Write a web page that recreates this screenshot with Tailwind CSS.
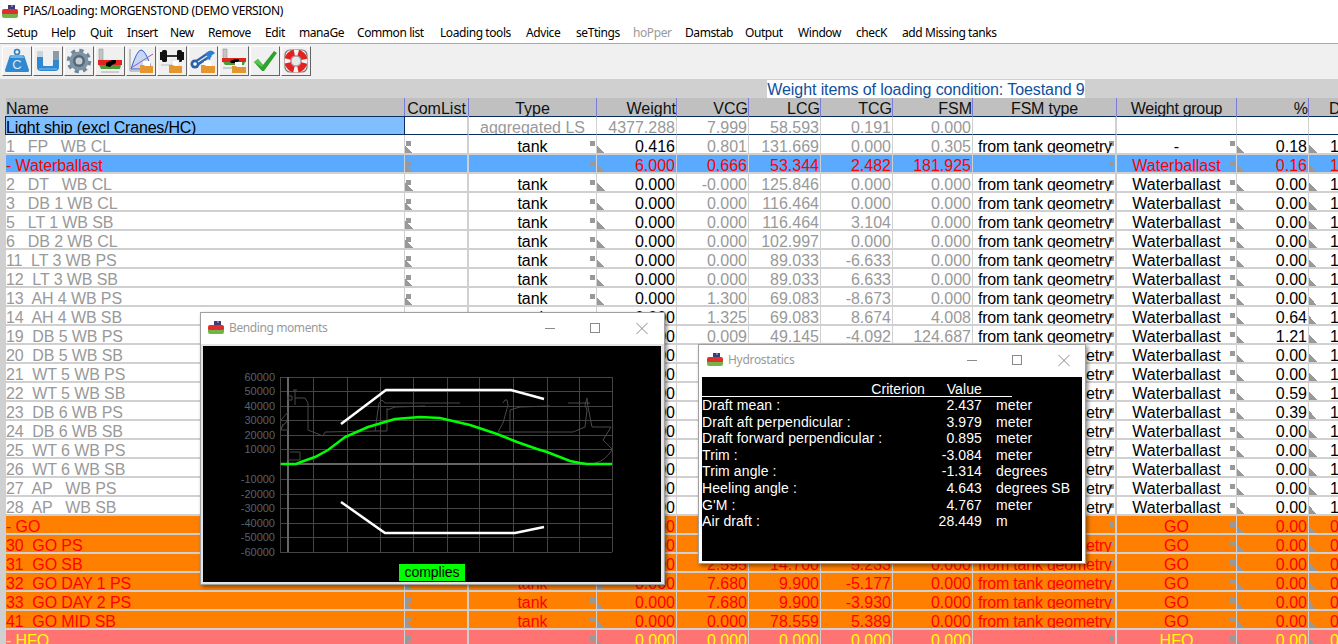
<!DOCTYPE html>
<html lang="en">
<head>
<meta charset="utf-8">
<title>PIAS/Loading</title>
<script src="https://cdn.jsdelivr.net/npm/@tailwindcss/browser@4"></script>
</head>
<body class="m-0 overflow-hidden">
<div class="relative w-[1338px] h-[644px] overflow-hidden bg-[#d0d0d0] flex flex-col font-['Liberation_Sans',sans-serif]">

  <!-- title bar -->
  <div class="h-[22px] bg-white flex items-center pl-[2px] gap-[5px] shrink-0">
    <svg width="16" height="14" viewBox="0 0 16 14" class="mt-[1px]"><path d="M6 0h7v5H6z" fill="#3c3c78"/><path d="M9 0h2v2H9z" fill="#7a7ab8"/><rect x="0" y="4" width="16" height="6" rx="2" fill="#e0302c"/><path d="M0 9h16v2q0 2-2 2H2q-2 0-2-2z" fill="#74b347"/></svg>
    <span class="font-['Noto_Sans',sans-serif] text-[12px] tracking-[-0.35px] text-black">PIAS/Loading: MORGENSTOND (DEMO VERSION)</span>
  </div>

  <!-- menu -->
  <div class="h-[21px] bg-white flex items-center pl-[7px] shrink-0 font-['Noto_Sans',sans-serif] text-[12px] tracking-[-0.42px] text-black whitespace-nowrap">
    <span class="w-[44px]">Setup</span><span class="w-[39px]">Help</span><span class="w-[37px]">Quit</span><span class="w-[43px]">Insert</span><span class="w-[38px]">New</span><span class="w-[57px]">Remove</span><span class="w-[34px]">Edit</span><span class="w-[58px]">manaGe</span><span class="w-[83px]">Common list</span><span class="w-[86px]">Loading tools</span><span class="w-[50px]">Advice</span><span class="w-[57px]">seTtings</span><span class="w-[52px] text-[#9a9a9a]">hoPper</span><span class="w-[60px]">Damstab</span><span class="w-[53px]">Output</span><span class="w-[58px]">Window</span><span class="w-[46px]">checK</span><span>add Missing tanks</span>
  </div>

  <!-- toolbar -->
  <div class="h-[36px] bg-[#f0f0f0] border-t border-[#a8a8a8] flex items-start gap-[1px] pl-[2px] pt-[2px] shrink-0">
    <div class="w-[30px] h-[30px] bg-[#f0f0f0] border border-t-white border-l-white border-r-[#666] border-b-[#666] flex items-center justify-center">
      <svg width="26" height="26" viewBox="0 0 26 26"><circle cx="13" cy="4" r="2.500" fill="none" stroke="#2f7fc4" stroke-width="1.600"/><path d="M7 7h12q1 0 1.500 1.500L25 22q.5 2-1.500 2h-21Q.5 24 1 22L5.500 8.500Q6 7 7 7z" fill="#2f88d0"/><path d="M7 7h12l1 3H6z" fill="#6db4e6"/><text x="13" y="21" text-anchor="middle" font-size="13" fill="#d8ecfa" font-family="Liberation Sans">C</text></svg>
    </div>
    <div class="w-[30px] h-[30px] bg-[#f0f0f0] border border-t-white border-l-white border-r-[#666] border-b-[#666] flex items-center justify-center">
      <svg width="26" height="26" viewBox="0 0 26 26"><path d="M2 3h6v14q0 1 1 1h8q1 0 1-1V3h6v16q0 4-4 4H6q-4 0-4-4z" fill="#2f88d0"/><path d="M2 3h6v6H2z" fill="#c9d4dc"/><path d="M18 3h6v9h-6z" fill="#8c9aa5"/><path d="M4 21h18" stroke="#7cc0ef" stroke-width="1"/></svg>
    </div>
    <div class="w-[30px] h-[30px] bg-[#f0f0f0] border border-t-white border-l-white border-r-[#666] border-b-[#666] flex items-center justify-center">
      <svg width="26" height="26" viewBox="0 0 26 26"><circle cx="13" cy="13" r="10.500" fill="none" stroke="#6f8799" stroke-width="3.500" stroke-dasharray="4.200 4.050"/><circle cx="13" cy="13" r="9.500" fill="#7d94a6"/><circle cx="13" cy="13" r="6" fill="#54697a"/><circle cx="13" cy="13" r="3.500" fill="#c8ced3"/></svg>
    </div>
    <div class="w-[30px] h-[30px] bg-[#f0f0f0] border border-t-white border-l-white border-r-[#666] border-b-[#666] flex items-center justify-center">
      <svg width="26" height="26" viewBox="0 0 26 26"><path d="M2 1h4v11H2z" fill="#c4c4c4" stroke="#888" stroke-width=".5"/><path d="M1 12h24v5H1z" fill="#e0241f"/><path d="M2 17h22l-1 4H4z" fill="#4c9a3a"/><path d="M9 15l6-3 4 0v3l-4 2-2 2-4-1z" fill="#000"/><path d="M4 24h18" stroke="#c0c0c0" stroke-width="1.500"/></svg>
    </div>
    <div class="w-[30px] h-[30px] bg-[#f0f0f0] border border-t-white border-l-white border-r-[#666] border-b-[#666] flex items-center justify-center">
      <svg width="26" height="26" viewBox="0 0 26 26"><path d="M2 1v22h12" fill="none" stroke="#999" stroke-width="1"/><path d="M3 21Q9 2 13 2q4 0 9 14v5H3z" fill="#c7d8f2" stroke="#3a5ccc" stroke-width="1"/><path d="M3 20L25 6" stroke="#9a5ab8" stroke-width="1"/><rect x="15" y="13" width="7" height="5" fill="#fff"/><path d="M12 17h4l1 1h8v7H12z" fill="#e5962e"/></svg>
    </div>
    <div class="w-[30px] h-[30px] bg-[#f0f0f0] border border-t-white border-l-white border-r-[#666] border-b-[#666] flex items-center justify-center">
      <svg width="26" height="26" viewBox="0 0 26 26"><path d="M1 8h24" stroke="#333" stroke-width="2"/><rect x="1" y="4" width="2" height="8" fill="#111"/><rect x="3" y="2" width="5" height="12" rx="1.500" fill="#111"/><rect x="18" y="2" width="5" height="12" rx="1.500" fill="#111"/><rect x="23" y="4" width="2" height="8" fill="#111"/><path d="M2 17h14" stroke="#ccc" stroke-width="1.500"/><rect x="13" y="12" width="7" height="6" fill="#fff" stroke="#ccc" stroke-width=".5"/><path d="M10 17h4l1 1h8v7H10z" fill="#e5962e"/></svg>
    </div>
    <div class="w-[30px] h-[30px] bg-[#f0f0f0] border border-t-white border-l-white border-r-[#666] border-b-[#666] flex items-center justify-center">
      <svg width="26" height="26" viewBox="0 0 26 26"><path d="M4 17L20 6" stroke="#2d62a8" stroke-width="6"/><circle cx="5" cy="16" r="4.500" fill="#2d62a8"/><circle cx="5" cy="16" r="1.800" fill="#fff"/><path d="M16 5q5-5 9 0l-4 3-1 4q-4-1-4-7z" fill="#2d7fd0"/><path d="M8 14l9-6" stroke="#dfe8f2" stroke-width="1.500"/><rect x="14" y="13" width="7" height="5" fill="#fff"/><path d="M11 17h4l1 1h9v7H11z" fill="#e5962e"/></svg>
    </div>
    <div class="w-[30px] h-[30px] bg-[#f0f0f0] border border-t-white border-l-white border-r-[#666] border-b-[#666] flex items-center justify-center">
      <svg width="26" height="26" viewBox="0 0 26 26"><path d="M2 1h4v10H2z" fill="#c4c4c4" stroke="#888" stroke-width=".5"/><path d="M1 10h24v4H1z" fill="#e0241f"/><path d="M2 14h22l-1 3H4z" fill="#4c9a3a"/><path d="M9 13l5-2h4v2l-4 2-4 0z" fill="#000"/><path d="M2 20h10" stroke="#c0c0c0" stroke-width="1.500"/><rect x="14" y="14" width="7" height="5" fill="#fff"/><path d="M11 18h4l1 1h9v6H11z" fill="#e5962e"/></svg>
    </div>
    <div class="w-[30px] h-[30px] bg-[#f0f0f0] border border-t-white border-l-white border-r-[#666] border-b-[#666] flex items-center justify-center">
      <svg width="26" height="26" viewBox="0 0 26 26"><path d="M2 14l4-3 5 6L22 3l3 2-13 18h-2z" fill="#2fa12f"/><path d="M2 14l4-3 5 6-1 2z" fill="#55c455"/></svg>
    </div>
    <div class="w-[30px] h-[30px] bg-[#f0f0f0] border border-t-white border-l-white border-r-[#666] border-b-[#666] flex items-center justify-center">
      <svg width="26" height="26" viewBox="0 0 26 26"><rect x="2" y="2" width="22" height="22" rx="5" fill="none" stroke="#777" stroke-width="1.200"/><circle cx="13" cy="13" r="8.500" fill="none" stroke="#e3221f" stroke-width="6"/><circle cx="13" cy="13" r="8.500" fill="none" stroke="#f4f4f4" stroke-width="6" stroke-dasharray="4 9.350" stroke-dashoffset="2"/><circle cx="13" cy="13" r="5" fill="#e8e8e8" stroke="#8a8a8a" stroke-width="1"/></svg>
    </div>
  </div>

  <!-- caption chip -->
  <div class="h-[19px] pl-[767px] pt-[1px] shrink-0">
    <div class="w-[318px] h-[18px] bg-white text-[16px] leading-[19px] tracking-[-0.09px] text-[#0f4fa0] text-center whitespace-nowrap overflow-hidden">Weight items of loading condition: Toestand 9</div>
  </div>

  <!-- table -->
  <div class="pl-[6px] overflow-hidden">
    <table class="table-fixed w-[1404px] border-separate border-spacing-0 text-[16px] leading-[13px] text-black
      [&_th]:p-0 [&_th]:pt-[3px] [&_th]:h-[18px] [&_th]:leading-[15px] [&_th]:font-normal [&_th]:bg-[#c0c0c0] [&_th]:text-[#111] [&_th]:border-r [&_th]:border-[#7b7bdc] [&_th]:overflow-hidden
      [&_td]:p-0 [&_td]:pt-[4px] [&_td]:h-[19px] [&_td]:align-top [&_td]:overflow-hidden [&_td]:whitespace-pre [&_td]:border-r [&_td]:border-b-2 [&_td]:border-[#d0d0d0]
      [&_td:nth-child(2)]:border-r-2 [&_td:nth-child(9)]:border-r-2
      [&_td:first-child]:text-[#999] [&_td:first-child]:tracking-[-0.1px]
      [&_td:nth-child(n+5):nth-child(-n+8)]:text-[#999]
      [&_td:nth-child(3)]:text-center
      [&_td:nth-child(n+4):nth-child(-n+8)]:text-right [&_td:nth-child(n+4):nth-child(-n+8)]:pr-[1px]
      [&_td:nth-child(9)]:pl-[5px] [&_td:nth-child(9)]:tracking-[-0.22px]
      [&_td:nth-child(10)]:text-center
      [&_td:nth-child(11)]:text-right [&_td:nth-child(11)]:pr-[1px]
      [&_td:nth-child(12)]:pl-[21px]
      [&>tbody+tbody>tr>td:nth-child(2)]:[background:linear-gradient(#999,#999)_1px_6px/5px_5px_no-repeat,linear-gradient(45deg,#999_50%,transparent_50%)_0_100%/8px_8px_no-repeat]
      [&>tbody+tbody>tr>td:nth-child(3)]:[background:linear-gradient(#999,#999)_right_1px_top_6px/5px_5px_no-repeat]
      [&>tbody+tbody>tr>td:nth-child(4)]:[background:linear-gradient(45deg,#999_50%,transparent_50%)_0_100%/8px_8px_no-repeat]
      [&>tbody+tbody>tr>td:nth-child(9)]:[background:linear-gradient(#999,#999)_right_1px_top_6px/5px_5px_no-repeat]
      [&>tbody+tbody>tr>td:nth-child(10)]:[background:linear-gradient(#999,#999)_right_1px_top_6px/5px_5px_no-repeat]
      [&>tbody+tbody>tr>td:nth-child(11)]:[background:linear-gradient(45deg,#999_50%,transparent_50%)_0_100%/8px_8px_no-repeat]
      [&>tbody+tbody>tr>td:nth-child(12)]:[background:linear-gradient(45deg,#999_50%,transparent_50%)_0_100%/8px_8px_no-repeat]">
      <colgroup>
        <col class="w-[399px]"><col class="w-[64px]"><col class="w-[128px]"><col class="w-[80px]"><col class="w-[72px]"><col class="w-[72px]"><col class="w-[72px]"><col class="w-[80px]"><col class="w-[144px]"><col class="w-[120px]"><col class="w-[72px]"><col class="w-[101px]">
      </colgroup>
      <thead>
        <tr><th class="text-left">Name</th><th>ComList</th><th>Type</th><th class="text-right">Weight</th><th class="text-right">VCG</th><th class="text-right">LCG</th><th class="text-right">TCG</th><th class="text-right">FSM</th><th class="tracking-[-0.2px]">FSM type</th><th class="tracking-[-0.3px]">Weight group</th><th class="text-right">%</th><th class="text-left !pl-[20px] !border-r-0 whitespace-nowrap">Density</th></tr>
      </thead>
      <tbody class="bg-white [&_td]:!pt-[4px] [&_td]:!border-b [&_td]:!border-b-[#0b2e5e] [&_td]:border-t [&_td]:border-t-[#0b2e5e] [&_td:nth-child(n+2)]:!text-[#999] [&_td]:h-[19px]">
        <tr><td class="!text-black !tracking-[-0.2px] bg-[#80bfff] shadow-[-1px_0_0_#0b2e5e] !border-r !border-r-[#0b2e5e]">Light ship (excl Cranes/HC)</td><td></td><td>aggregated LS</td><td>4377.288</td><td>7.999</td><td>58.593</td><td>0.191</td><td>0.000</td><td></td><td></td><td></td><td></td></tr>
      </tbody>
      <tbody class="bg-white [&_td]:h-[20px] [&_td]:!pt-[5px]">
        <tr><td>1   FP   WB CL</td><td></td><td>tank</td><td>0.416</td><td>0.801</td><td>131.669</td><td>0.000</td><td>0.305</td><td>from tank geometry</td><td>-</td><td>0.18</td><td>1</td></tr>
      </tbody>
      <tbody class="bg-[#5aaaff] [&_td]:!text-[#ff0000]">
        <tr><td>- Waterballast</td><td></td><td></td><td>6.000</td><td>0.666</td><td>53.344</td><td>2.482</td><td>181.925</td><td></td><td>Waterballast</td><td>0.16</td><td>1</td></tr>
      </tbody>
      <tbody class="bg-white">
        <tr><td>2   DT   WB CL</td><td></td><td>tank</td><td>0.000</td><td>-0.000</td><td>125.846</td><td>0.000</td><td>0.000</td><td>from tank geometry</td><td>Waterballast</td><td>0.00</td><td>1</td></tr>
        <tr><td>3   DB 1 WB CL</td><td></td><td>tank</td><td>0.000</td><td>0.000</td><td>116.464</td><td>0.000</td><td>0.000</td><td>from tank geometry</td><td>Waterballast</td><td>0.00</td><td>1</td></tr>
        <tr><td>5   LT 1 WB SB</td><td></td><td>tank</td><td>0.000</td><td>0.000</td><td>116.464</td><td>3.104</td><td>0.000</td><td>from tank geometry</td><td>Waterballast</td><td>0.00</td><td>1</td></tr>
        <tr><td>6   DB 2 WB CL</td><td></td><td>tank</td><td>0.000</td><td>0.000</td><td>102.997</td><td>0.000</td><td>0.000</td><td>from tank geometry</td><td>Waterballast</td><td>0.00</td><td>1</td></tr>
        <tr><td>11  LT 3 WB PS</td><td></td><td>tank</td><td>0.000</td><td>0.000</td><td>89.033</td><td>-6.633</td><td>0.000</td><td>from tank geometry</td><td>Waterballast</td><td>0.00</td><td>1</td></tr>
        <tr><td>12  LT 3 WB SB</td><td></td><td>tank</td><td>0.000</td><td>0.000</td><td>89.033</td><td>6.633</td><td>0.000</td><td>from tank geometry</td><td>Waterballast</td><td>0.00</td><td>1</td></tr>
        <tr><td>13  AH 4 WB PS</td><td></td><td>tank</td><td>0.000</td><td>1.300</td><td>69.083</td><td>-8.673</td><td>0.000</td><td>from tank geometry</td><td>Waterballast</td><td>0.00</td><td>1</td></tr>
        <tr><td>14  AH 4 WB SB</td><td></td><td>tank</td><td>0.000</td><td>1.325</td><td>69.083</td><td>8.674</td><td>4.008</td><td>from tank geometry</td><td>Waterballast</td><td>0.64</td><td>1</td></tr>
        <tr><td>19  DB 5 WB PS</td><td></td><td>tank</td><td>0.000</td><td>0.009</td><td>49.145</td><td>-4.092</td><td>124.687</td><td>from tank geometry</td><td>Waterballast</td><td>1.21</td><td>1</td></tr>
        <tr><td>20  DB 5 WB SB</td><td></td><td>tank</td><td>0.000</td><td>0.000</td><td>49.145</td><td>4.092</td><td>0.000</td><td>from tank geometry</td><td>Waterballast</td><td>0.00</td><td>1</td></tr>
        <tr><td>21  WT 5 WB PS</td><td></td><td>tank</td><td>0.000</td><td>0.000</td><td>49.145</td><td>-7.000</td><td>0.000</td><td>from tank geometry</td><td>Waterballast</td><td>0.00</td><td>1</td></tr>
        <tr><td>22  WT 5 WB SB</td><td></td><td>tank</td><td>0.000</td><td>0.000</td><td>49.145</td><td>7.000</td><td>0.000</td><td>from tank geometry</td><td>Waterballast</td><td>0.59</td><td>1</td></tr>
        <tr><td>23  DB 6 WB PS</td><td></td><td>tank</td><td>0.000</td><td>0.000</td><td>29.000</td><td>-4.000</td><td>0.000</td><td>from tank geometry</td><td>Waterballast</td><td>0.39</td><td>1</td></tr>
        <tr><td>24  DB 6 WB SB</td><td></td><td>tank</td><td>0.000</td><td>0.000</td><td>29.000</td><td>4.000</td><td>0.000</td><td>from tank geometry</td><td>Waterballast</td><td>0.00</td><td>1</td></tr>
        <tr><td>25  WT 6 WB PS</td><td></td><td>tank</td><td>0.000</td><td>0.000</td><td>29.000</td><td>-7.000</td><td>0.000</td><td>from tank geometry</td><td>Waterballast</td><td>0.00</td><td>1</td></tr>
        <tr><td>26  WT 6 WB SB</td><td></td><td>tank</td><td>0.000</td><td>0.000</td><td>29.000</td><td>7.000</td><td>0.000</td><td>from tank geometry</td><td>Waterballast</td><td>0.00</td><td>1</td></tr>
        <tr><td>27  AP   WB PS</td><td></td><td>tank</td><td>0.000</td><td>0.000</td><td>8.000</td><td>-3.000</td><td>0.000</td><td>from tank geometry</td><td>Waterballast</td><td>0.00</td><td>1</td></tr>
        <tr><td>28  AP   WB SB</td><td></td><td>tank</td><td>0.000</td><td>0.000</td><td>8.000</td><td>3.000</td><td>0.000</td><td>from tank geometry</td><td>Waterballast</td><td>0.00</td><td>1</td></tr>
      </tbody>
      <tbody class="bg-[#ff8000] [&_td]:!text-[#ff0000]">
        <tr><td>- GO</td><td></td><td></td><td>0.000</td><td>0.000</td><td>0.000</td><td>0.000</td><td>0.000</td><td></td><td>GO</td><td>0.00</td><td>0</td></tr>
        <tr><td>30  GO PS</td><td></td><td>tank</td><td>0.000</td><td>2.595</td><td>14.700</td><td>-5.233</td><td>0.000</td><td>from tank geometry</td><td>GO</td><td>0.00</td><td>0</td></tr>
        <tr><td>31  GO SB</td><td></td><td>tank</td><td>0.000</td><td>2.595</td><td>14.700</td><td>5.233</td><td>0.000</td><td>from tank geometry</td><td>GO</td><td>0.00</td><td>0</td></tr>
        <tr><td>32  GO DAY 1 PS</td><td></td><td>tank</td><td>0.000</td><td>7.680</td><td>9.900</td><td>-5.177</td><td>0.000</td><td>from tank geometry</td><td>GO</td><td>0.00</td><td>0</td></tr>
        <tr><td>33  GO DAY 2 PS</td><td></td><td>tank</td><td>0.000</td><td>7.680</td><td>9.900</td><td>-3.930</td><td>0.000</td><td>from tank geometry</td><td>GO</td><td>0.00</td><td>0</td></tr>
        <tr><td>41  GO MID SB</td><td></td><td>tank</td><td>0.000</td><td>0.000</td><td>78.559</td><td>5.389</td><td>0.000</td><td>from tank geometry</td><td>GO</td><td>0.00</td><td>0</td></tr>
      </tbody>
      <tbody class="bg-[#ff7373] [&_td]:!text-[#ffff00]">
        <tr><td>- HFO</td><td></td><td></td><td>0.000</td><td>0.000</td><td>0.000</td><td>0.000</td><td>0.000</td><td></td><td>HFO</td><td>0.00</td><td>0</td></tr>
      </tbody>
    </table>
  </div>

  <!-- Bending moments window -->
  <div class="absolute left-[200px] top-[312px] w-[465px] h-[273px] bg-white border border-[#a0a0a0] shadow-[2px_2px_4px_rgba(0,0,0,0.45)] flex flex-col">
    <div class="h-[31px] flex items-center pl-[7px] pb-[2px] shrink-0">
      <svg width="16" height="14" viewBox="0 0 16 14"><path d="M6 0h7v5H6z" fill="#3c3c78"/><path d="M9 0h2v2H9z" fill="#7a7ab8"/><rect x="0" y="4" width="16" height="6" rx="2" fill="#e0302c"/><path d="M0 9h16v2q0 2-2 2H2q-2 0-2-2z" fill="#74b347"/></svg>
      <span class="ml-[5px] font-['Noto_Sans',sans-serif] text-[12px] tracking-[-0.4px] text-[#999]">Bending moments</span>
      <svg width="113" height="14" viewBox="0 0 113 14" class="ml-auto mr-[6px]"><path d="M0 7.500h10" stroke="#8a8a8a"/><rect x="45.500" y="2.500" width="9" height="9" fill="none" stroke="#8a8a8a"/><path d="M91.500 2l11 11M102.500 2l-11 11" stroke="#8a8a8a"/></svg>
    </div>
    <div class="flex-1 bg-[#e4e4e4] pl-[2px] pr-[2px] pt-[2px] pb-[2px] min-h-0">
      <svg width="458" height="236" viewBox="203 346 458 236" class="block bg-black font-['Liberation_Sans',sans-serif] text-[11px]">
        <g stroke="#444" stroke-width="1" fill="none" shape-rendering="crispEdges">
          <path d="M280 377H612M280 391H612M280 406H612M280 420H612M280 435H612M280 449H612M280 479H612M280 494H612M280 508H612M280 523H612M280 537H612M280 552H612"/>
          <path d="M280 377V552M313 377V552M347 377V552M380 377V552M413 377V552M447 377V552M479 377V552M513 377V552M547 377V552M579 377V552M612 377V552"/>
          <path d="M280 464H612" stroke="#666" stroke-width="2"/>
          <path d="M288 377V552" stroke="#666" stroke-width="2"/>
        </g>
        <g stroke="#4a4a4a" stroke-width="1" fill="none">
          <path d="M281 420L288 412M281 428L287 421L288 430H281L283 424M293 390H297M295 390V405M288 396H292V400H288Z"/>
          <path d="M295 398H305L308 403V430L323 436L325 432L375 431L379 403L382 400L385 403H460"/>
          <path d="M387 410L395 407L425 406M387 408V431H375"/>
          <path d="M503 403L505 400L507 400L508 405L503 423L498 432H510"/>
          <path d="M510 410L520 407L550 406M510 410V432H573L585 427L587 410L585 405L587 398L588 407L592 427H611L603 440L612 449"/>
          <path d="M568 403H590"/>
          <path d="M288 449V460H300V452H290M612 450Q605 461 595 463"/>
        </g>
        <g fill="#56626e" text-anchor="end">
          <text x="275" y="381">60000</text><text x="275" y="395">50000</text><text x="275" y="410">40000</text><text x="275" y="424">30000</text><text x="275" y="439">20000</text><text x="275" y="453">10000</text>
          <text x="275" y="483">-10000</text><text x="275" y="498">-20000</text><text x="275" y="512">-30000</text><text x="275" y="527">-40000</text><text x="275" y="541">-50000</text><text x="275" y="556">-60000</text>
        </g>
        <path d="M341 424L386 390H511L544 399" fill="none" stroke="#fff" stroke-width="2.500"/>
        <path d="M341 502L385 533H515L544 527" fill="none" stroke="#fff" stroke-width="2.500"/>
        <path d="M281 464H296L301 462L315 457L328 450L345 437L368 427L395 419L420 417L440 418L470 425L497 434L517 442L537 449L547 452L570 461L580 463L587 464H612" fill="none" stroke="#00ff00" stroke-width="2.500"/>
        <rect x="399" y="564" width="66" height="17" fill="#00ff00"/>
        <text x="432" y="577" text-anchor="middle" class="text-[14px]" fill="#000">complies</text>
      </svg>
    </div>
  </div>

  <!-- Hydrostatics window -->
  <div class="absolute left-[698px] top-[344px] w-[388px] h-[220px] bg-white border border-[#a0a0a0] shadow-[2px_2px_4px_rgba(0,0,0,0.45)] flex flex-col">
    <div class="h-[31px] flex items-center pl-[8px] pb-[2px] shrink-0">
      <svg width="16" height="14" viewBox="0 0 16 14"><path d="M6 0h7v5H6z" fill="#3c3c78"/><path d="M9 0h2v2H9z" fill="#7a7ab8"/><rect x="0" y="4" width="16" height="6" rx="2" fill="#e0302c"/><path d="M0 9h16v2q0 2-2 2H2q-2 0-2-2z" fill="#74b347"/></svg>
      <span class="ml-[5px] font-['Noto_Sans',sans-serif] text-[12px] tracking-[-0.3px] text-[#999]">Hydrostatics</span>
      <svg width="113" height="14" viewBox="0 0 113 14" class="ml-auto mr-[5px]"><path d="M0 7.500h10" stroke="#8a8a8a"/><rect x="45.500" y="2.500" width="9" height="9" fill="none" stroke="#8a8a8a"/><path d="M91.500 2l11 11M102.500 2l-11 11" stroke="#8a8a8a"/></svg>
    </div>
    <div class="mx-[3px] mt-[1px] h-[184px] bg-black text-white text-[14px] leading-[16.6px] tracking-[0.1px] whitespace-nowrap">
      <div class="w-[310px] h-[20px] pt-[4px] border-b border-white flex">
        <span class="w-[223px] text-right">Criterion</span><span class="w-[57px] text-right">Value</span>
      </div>
      <div class="grid grid-cols-[223px_57px_14px_auto]"><span>Draft mean :</span><span class="col-start-2 text-right">2.437</span><span class="col-start-4">meter</span></div>
      <div class="grid grid-cols-[223px_57px_14px_auto]"><span>Draft aft perpendicular :</span><span class="col-start-2 text-right">3.979</span><span class="col-start-4">meter</span></div>
      <div class="grid grid-cols-[223px_57px_14px_auto]"><span>Draft forward perpendicular :</span><span class="col-start-2 text-right">0.895</span><span class="col-start-4">meter</span></div>
      <div class="grid grid-cols-[223px_57px_14px_auto]"><span>Trim :</span><span class="col-start-2 text-right">-3.084</span><span class="col-start-4">meter</span></div>
      <div class="grid grid-cols-[223px_57px_14px_auto]"><span>Trim angle :</span><span class="col-start-2 text-right">-1.314</span><span class="col-start-4">degrees</span></div>
      <div class="grid grid-cols-[223px_57px_14px_auto]"><span>Heeling angle :</span><span class="col-start-2 text-right">4.643</span><span class="col-start-4">degrees SB</span></div>
      <div class="grid grid-cols-[223px_57px_14px_auto]"><span>G'M :</span><span class="col-start-2 text-right">4.767</span><span class="col-start-4">meter</span></div>
      <div class="grid grid-cols-[223px_57px_14px_auto]"><span>Air draft :</span><span class="col-start-2 text-right">28.449</span><span class="col-start-4">m</span></div>
    </div>
  </div>
</div>
</body>
</html>
